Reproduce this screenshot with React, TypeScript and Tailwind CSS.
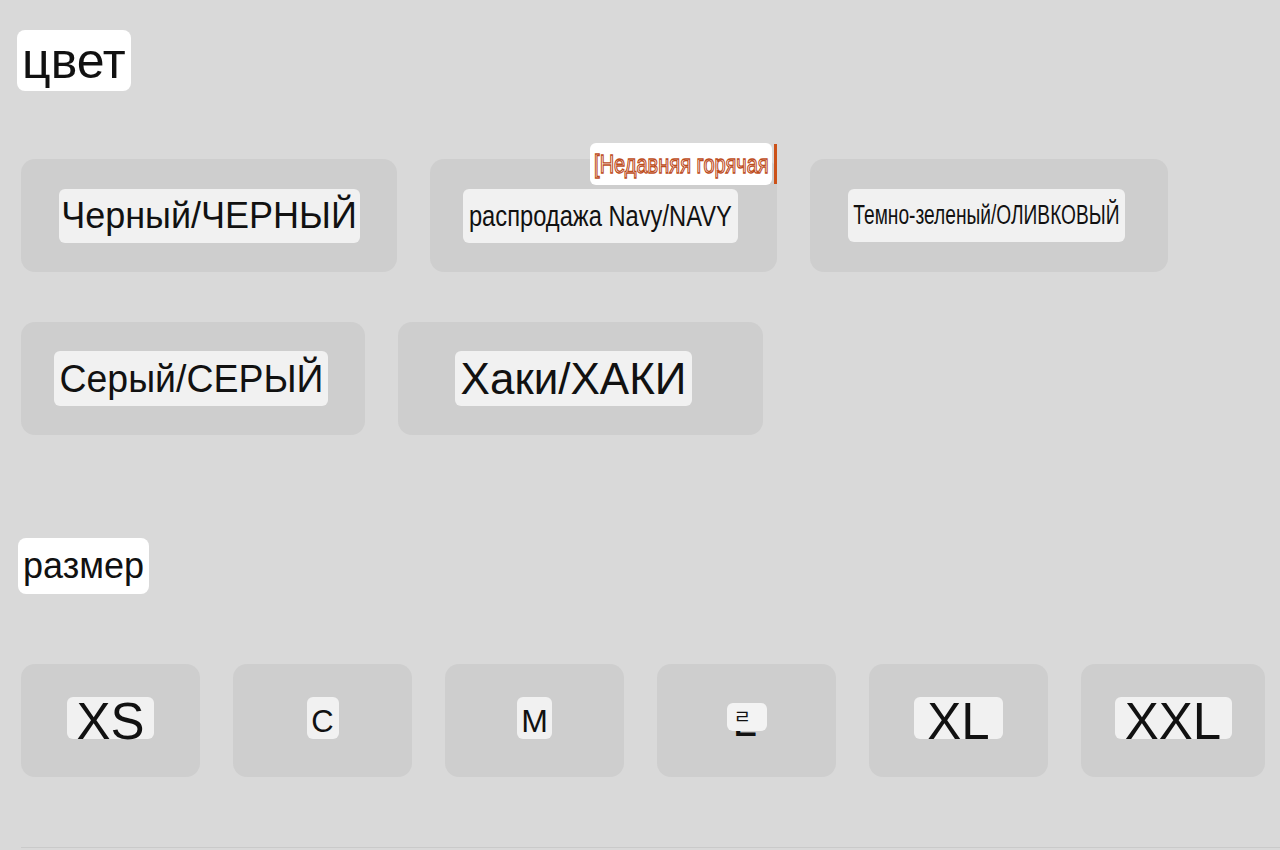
const font = { fontFamily: '"Liberation Sans", Arial, "Noto Sans CJK KR", sans-serif' };

type ColorOption = {
  label: string;
  width: string;
  chip: string;
  text: string;
  shift?: string;
};

const colorRows: ColorOption[][] = [
  [
    { label: "Черный/ЧЕРНЫЙ", width: "w-[376px]", chip: "w-[301px] h-[54px]", text: "text-[36px]" },
    { label: "распродажа Navy/NAVY", width: "w-[347px]", chip: "w-[275px] h-[54px]", text: "text-[30px] scale-x-[0.79] text-[#2b2b2b]", shift: "pr-[7px]" },
    { label: "Темно-зеленый/ОЛИВКОВЫЙ", width: "w-[358px]", chip: "w-[277px] h-[53px]", text: "text-[27px] scale-x-[0.71] text-[#1a1a1a]", shift: "pr-[5px]" },
  ],
  [
    { label: "Серый/СЕРЫЙ", width: "w-[344px]", chip: "w-[274px] h-[55px]", text: "text-[39px] scale-x-[0.96]", shift: "pr-[4px]" },
    { label: "Хаки/ХАКИ", width: "w-[365px]", chip: "w-[237px] h-[55px]", text: "text-[44px]", shift: "pr-[14px]" },
  ],
];

const sizes = [
  { label: "XS", chip: "w-[87px]", text: "text-[51px]" },
  { label: "С", chip: "w-[32px]", text: "text-[31px]" },
  { label: "M", chip: "w-[35px]", text: "text-[32px]" },
  { label: "L", chip: "", text: "" },
  { label: "XL", chip: "w-[89px]", text: "text-[51px]" },
  { label: "XXL", chip: "w-[117px]", text: "text-[51px]" },
];

const ColorButton = ({ option, hot }: { option: ColorOption; hot?: boolean }) => (
  <div
    className={`relative flex h-[113px] shrink-0 items-center justify-center rounded-[14px] bg-[#cecece] ${option.width} ${option.shift ?? ""}`}
  >
    <div className={`flex shrink-0 items-center justify-center overflow-visible rounded-md bg-[#f1f1f1] ${option.chip}`}>
      <span className={`inline-block shrink-0 whitespace-nowrap leading-none text-[#111] ${option.text}`}>
        {option.label}
      </span>
    </div>
    {hot && (
      <>
        <div className="absolute left-[160px] top-[-16px] flex h-[42px] w-[182px] items-center justify-center overflow-hidden rounded-md bg-white">
          <span className="inline-block shrink-0 whitespace-nowrap text-[26px] leading-none text-white scale-x-[0.77] [-webkit-text-stroke:1.3px_#bd4c1b]">
            [Недавняя горячая
          </span>
        </div>
        <div className="absolute left-[344px] top-[-15px] h-[40px] w-[3px] bg-[#cc5219]" />
      </>
    )}
  </div>
);

const SizeButton = ({ size }: { size: (typeof sizes)[number] }) => {
  const isLast = size.label === "XXL";
  return (
    <div
      className={`flex h-[113px] shrink-0 items-center justify-center rounded-[14px] bg-[#cecece] pb-[5px] ${isLast ? "w-[184px]" : "w-[179px]"}`}
    >
      {size.label === "L" ? (
        <div className="relative h-[40px] w-[44px]">
          <span className="absolute left-[8px] top-[1px] text-[44px] leading-none text-[#111]">L</span>
          <div className="absolute left-[2px] top-[5px] flex h-[28px] w-[40px] items-center rounded-md bg-[#f3f3f3] pl-[7px]">
            <span className="text-[19px] leading-none text-[#111]">ㄹ</span>
          </div>
        </div>
      ) : (
        <div className={`flex h-[42px] shrink-0 items-center justify-center rounded-md bg-[#f1f1f1] pt-[6px] ${size.chip}`}>
          <span className={`inline-block whitespace-nowrap leading-none text-[#111] ${size.text}`}>{size.label}</span>
        </div>
      )}
    </div>
  );
};

export default function App() {
  return (
    <div className="min-h-[850px] w-full overflow-hidden bg-[#d9d9d9] pl-[21px] pt-[30px]" style={font}>
      <div className="-ml-[4px] inline-flex h-[61px] items-center rounded-lg bg-white px-[5px] text-[50px] leading-none text-[#111]">
        цвет
      </div>

      <div className="mt-[68px] flex flex-col gap-[50px]">
        {colorRows.map((row, i) => (
          <div key={i} className="flex gap-[33px]">
            {row.map((option, j) => (
              <ColorButton key={option.label} option={option} hot={i === 0 && j === 1} />
            ))}
          </div>
        ))}
      </div>

      <div className="mt-[103px] -ml-[3px] inline-flex h-[56px] items-center rounded-lg bg-white px-[5px] text-[36px] leading-none text-[#111]">
        размер
      </div>

      <div className="mt-[70px] flex gap-[33px]">
        {sizes.map((size) => (
          <SizeButton key={size.label} size={size} />
        ))}
      </div>

      <div className="mt-[70px] h-px bg-[#cacaca]" />
    </div>
  );
}
